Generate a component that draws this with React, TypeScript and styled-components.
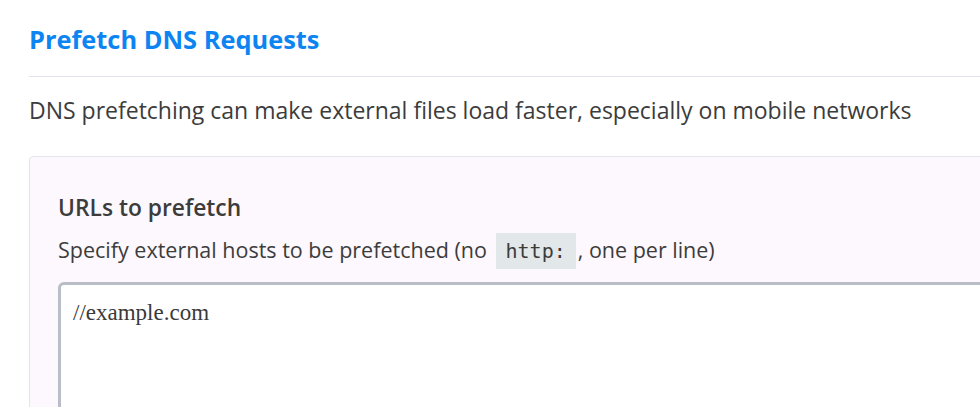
import styled, { createGlobalStyle } from "styled-components";

const GlobalStyle = createGlobalStyle`
  body {
    margin: 0;
    background: #fff;
    overflow: hidden;
    font-family: "Open Sans", "Noto Sans", sans-serif;
    color: #3c3c3c;
  }
`;

export default function App() {
  return (
    <>
      <GlobalStyle />
      <Page>
        <Title>Prefetch DNS Requests</Title>
        <Divider />
        <Lead>
          DNS prefetching can make external files load faster, especially on
          mobile networks
        </Lead>
        <Card>
          <FieldLabel>URLs to prefetch</FieldLabel>
          <FieldHint>
            Specify external hosts to be prefetched (no <Code>http:</Code>, one
            per line)
          </FieldHint>
          <UrlBox defaultValue="//example.com" />
        </Card>
      </Page>
    </>
  );
}

const Page = styled.div`
  width: 1200px;
  padding: 22px 0 0 29px;
`;

const Title = styled.h2`
  margin: 0;
  font-size: 25.4px;
  font-weight: 700;
  color: #0c84f1;
  line-height: 34px;
`;

const Divider = styled.hr`
  margin: 20px 0 0;
  border: 0;
  border-top: 1px solid #e4e3ea;
`;

const Lead = styled.p`
  margin: 12px 0 0;
  font-size: 23px;
  line-height: 42px;
  white-space: nowrap;
`;

const Card = styled.div`
  margin-top: 25px;
  padding: 34px 28px 0;
  background: #fdf8fd;
  border: 1px solid #e6e4ea;
  border-radius: 4px;
  height: 300px;
`;

const FieldLabel = styled.div`
  font-size: 22.8px;
  font-weight: 600;
  line-height: 34px;
`;

const FieldHint = styled.div`
  margin-top: 6px;
  font-size: 21.5px;
  line-height: 38px;
  white-space: nowrap;
`;

const Code = styled.code`
  font-family: "DejaVu Sans Mono", "Liberation Mono", monospace;
  font-size: 20px;
  background: #e2e7ea;
  padding: 6px 10px;
  margin: 0 2px 0 3px;
`;

const UrlBox = styled.textarea`
  display: block;
  box-sizing: border-box;
  width: 100%;
  height: 200px;
  margin-top: 12px;
  padding: 15px 12px;
  border: 3px solid #b9bdc8;
  border-radius: 6px;
  background: #fff;
  font-family: "Liberation Serif", serif;
  font-size: 23px;
  color: #3a3a3a;
  resize: none;
  outline: none;
`;
